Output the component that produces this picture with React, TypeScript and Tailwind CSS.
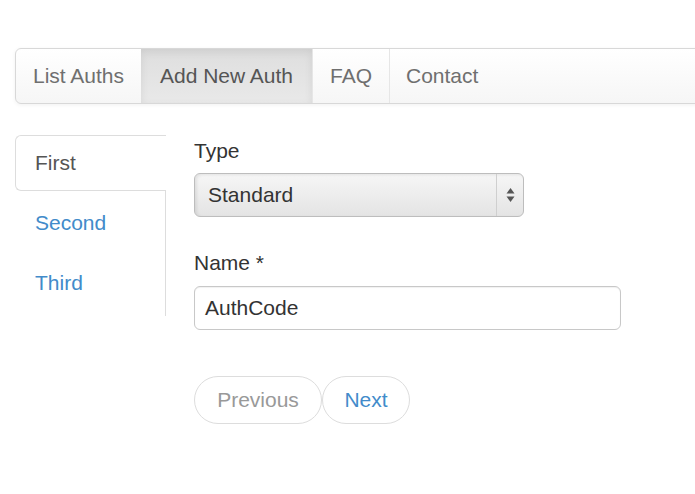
import React from "react";

export default function App() {
  const font = { fontFamily: '"Liberation Sans", Arial, sans-serif' };
  return (
    <div
      className="w-[695px] h-[494px] overflow-hidden bg-white text-[21px] text-[#333]"
      style={font}
    >
      <div className="pt-[48px] pl-[15px]">
        {/* Navbar */}
        <div className="w-[720px] h-[56px] flex border border-[#d8d8d8] rounded-l-[6px] bg-gradient-to-b from-white to-[#f6f6f6] shadow-[0_1px_4px_rgba(0,0,0,0.06)] overflow-hidden">
          <div className="w-[125px] flex items-center justify-center text-[#6f6f6f]">List Auths</div>
          <div className="w-[171px] flex items-center justify-center text-[#555] bg-gradient-to-b from-[#dedede] to-[#e9e9e9] shadow-[inset_0_3px_8px_rgba(0,0,0,0.08)]">
            Add New Auth
          </div>
          <div className="w-[77px] flex items-center justify-center text-[#6f6f6f] border-l border-[#e6e6e6]">FAQ</div>
          <div className="flex items-center pl-[16px] text-[#6f6f6f] border-l border-[#e6e6e6]">Contact</div>
        </div>

        {/* Body */}
        <div className="flex mt-[31px]">
          {/* Left tabs */}
          <div className="w-[151px] h-[181px] border-r border-[#ddd] flex flex-col gap-[4px] relative">
            <div className="h-[56px] w-[151px] -mr-[1px] bg-white border border-r-0 border-[#ddd] rounded-l-[6px] flex items-center pl-[19px] text-[#555]">
              First
            </div>
            <div className="h-[56px] flex items-center pl-[20px] text-[#428bca]">Second</div>
            <div className="h-[56px] flex items-center pl-[20px] text-[#428bca]">Third</div>
          </div>

          {/* Form */}
          <div className="ml-[28px] flex flex-col">
            <div className="h-[30px] flex items-center mt-[1px] text-[#333]">Type</div>
            <div className="mt-[7px] w-[330px] h-[44px] flex border border-[#bdbdbd] rounded-[6px] bg-gradient-to-b from-[#f6f6f6] to-[#e4e4e4] shadow-[inset_2px_1px_3px_rgba(0,0,0,0.08)]">
              <div className="flex-1 flex items-center pl-[13px] text-[#333]">Standard</div>
              <div className="w-[27px] border-l border-[#cfcfcf] flex items-center justify-center">
                <svg width="9" height="16" viewBox="0 0 9 16">
                  <path d="M4.5 1 L8.5 6.5 L0.5 6.5 Z" fill="#555" />
                  <path d="M4.5 15 L8.5 9.5 L0.5 9.5 Z" fill="#555" />
                </svg>
              </div>
            </div>
            <div className="mt-[31px] h-[30px] flex items-center text-[#333]">Name *</div>
            <div className="mt-[8px] w-[427px] h-[44px] border border-[#c8c8c8] rounded-[6px] flex items-center pl-[10px] text-[#333] shadow-[inset_0_1px_1px_rgba(0,0,0,0.06)]">
              AuthCode
            </div>
            <div className="mt-[46px] flex">
              <div className="w-[128px] h-[48px] rounded-full border border-[#ddd] flex items-center justify-center text-[#999]">
                Previous
              </div>
              <div className="w-[88px] h-[48px] rounded-full border border-[#ddd] flex items-center justify-center text-[#428bca]">
                Next
              </div>
            </div>
          </div>
        </div>
      </div>
    </div>
  );
}
